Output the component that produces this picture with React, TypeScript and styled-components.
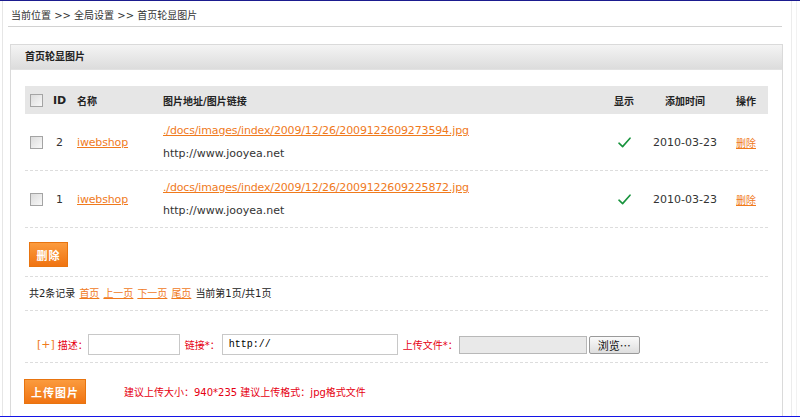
import React from "react";
import styled, { createGlobalStyle } from "styled-components";

const GlobalStyle = createGlobalStyle`
  html, body { margin: 0; padding: 0; background: #fff; }
  body {
    font-family: "DejaVu Sans", "Noto Sans CJK SC", sans-serif;
    font-size: 10px;
    color: #333;
  }
`;

const Frame = styled.div`
  width: 800px;
  height: 417px;
  box-sizing: border-box;
  border-top: 1px solid #1b1b8f;
  border-bottom: 1px solid #1414e6;
  display: flex;
  overflow: hidden;
`;

const LeftRail = styled.div`
  width: 2px;
  flex: none;
`;

const Main = styled.div`
  width: 781px;
  flex: none;
  box-sizing: border-box;
  border-left: 1px solid #e6e6e6;
  padding-left: 7px;
  display: flex;
  flex-direction: column;
`;

const RightRail = styled.div`
  flex: 1;
  display: flex;
  padding-left: 8px;
  gap: 4px;
`;

const RailLine = styled.div<{ $tone: string }>`
  width: 1px;
  background: ${(p) => p.$tone};
`;

const Breadcrumb = styled.div`
  margin-left: -2px;
  width: 774px;
  height: 26px;
  box-sizing: border-box;
  padding: 7px 0 0 3px;
  line-height: 16px;
  border-bottom: 1px solid #d2d2d2;
  color: #333;
`;

const Panel = styled.div`
  margin-top: 17px;
  flex: 1;
  border: 1px solid #dadada;
  border-bottom: none;
  display: flex;
  flex-direction: column;
`;

const PanelHead = styled.div`
  height: 24px;
  line-height: 24px;
  padding-left: 14px;
  font-weight: bold;
  color: #222;
  background: linear-gradient(#f4f4f4, #dcdcdc);
  border-bottom: 1px solid #e2e2e2;
`;

const PanelBody = styled.div`
  padding: 16px 14px 0 14px;
`;

const cols = "22px 25px 86px 1fr 44px 78px 44px";

const HeadRow = styled.div`
  display: grid;
  grid-template-columns: ${cols};
  height: 28px;
  align-items: center;
  background: #e6e6e6;
  font-weight: bold;
  color: #222;
`;

const Row = styled.div`
  display: grid;
  grid-template-columns: ${cols};
  height: 56px;
  align-items: center;
  border-bottom: 1px dashed #dddddd;
`;

const Cell = styled.div<{ $align?: "left" | "center" }>`
  display: flex;
  justify-content: ${(p) => (p.$align === "left" ? "flex-start" : "center")};
  padding-left: ${(p) => (p.$align === "left" ? "5px" : "0")};
`;

const StackCell = styled.div`
  display: flex;
  flex-direction: column;
  padding-left: 5px;
  line-height: 23px;
`;

const Latin = styled.span`
  font-size: 11px;
`;

const Check = styled.input.attrs({ type: "checkbox" })`
  appearance: none;
  margin: 0;
  width: 13px;
  height: 13px;
  box-sizing: border-box;
  border: 1px solid #a4a4a4;
  background: linear-gradient(135deg, #dcdcdc, #f8f8f8);
`;

const Link = styled.a`
  color: #f07a1c;
  text-decoration: underline;
  cursor: pointer;
`;

const PathLink = styled(Link)`
  font-size: 11px;
  letter-spacing: -0.15px;
`;

const ActionBar = styled.div`
  padding: 14px 0 9px 4px;
  border-bottom: 1px dashed #dddddd;
`;

const OrangeButton = styled.button<{ $w: number }>`
  width: ${(p) => p.$w}px;
  height: 25px;
  padding: 0;
  border: 1px solid #e8740f;
  background: linear-gradient(#fb9b3e, #f07412);
  color: #fff;
  font-family: "Noto Sans CJK SC", sans-serif;
  font-size: 11px;
  font-weight: bold;
  letter-spacing: 1px;
  cursor: pointer;
`;

const Pager = styled.div`
  height: 33px;
  line-height: 33px;
  padding-left: 4px;
  border-bottom: 1px dashed #dddddd;
  color: #222;
  display: flex;
  gap: 4px;
`;

const FormRow = styled.div`
  padding: 23px 0 7px 12px;
  border-bottom: 1px dashed #dddddd;
  display: flex;
  align-items: center;
  height: 21px;
`;

const AddLink = styled.a`
  color: #f07a1c;
  font-size: 11px;
  margin-right: 3px;
`;

const Label = styled.span`
  color: #e60012;
`;

const TextBox = styled.input<{ $w: number; $lead?: number }>`
  width: ${(p) => p.$w}px;
  height: 21px;
  box-sizing: border-box;
  border: 1px solid #c8c8c8;
  margin: 0 5px 0 ${(p) => p.$lead ?? 0}px;
  padding: 0 6px;
  font-family: "Liberation Mono", monospace;
  font-size: 10px;
  color: #000;
  outline: none;
`;

const FileBox = styled.div`
  width: 128px;
  height: 18px;
  box-sizing: border-box;
  border: 1px solid #b8b8b8;
  background: #e9e9e9;
  margin: 0 2px 0 1px;
`;

const BrowseButton = styled.button`
  width: 51px;
  height: 18px;
  padding: 0;
  box-sizing: border-box;
  border: 1px solid #9a9a9a;
  border-radius: 2px;
  background: linear-gradient(#fafafa, #dedede);
  font-family: "Noto Sans CJK SC", sans-serif;
  font-size: 11px;
  color: #111;
  line-height: 14px;
`;

const UploadBar = styled.div`
  padding: 16px 0 0 0;
  margin-left: -1px;
  display: flex;
  align-items: center;
`;

const Hint = styled.span`
  margin-left: 38px;
  color: #e60012;
`;

const CheckMark = () => (
  <svg width="13" height="11" viewBox="0 0 13 11">
    <path d="M1 6.2 L4.6 9.6 L12 1.2" fill="none" stroke="#17933c" strokeWidth="1.6" strokeLinecap="round" strokeLinejoin="round" />
  </svg>
);

const items = [
  { id: 2, name: "iwebshop", img: "./docs/images/index/2009/12/26/2009122609273594.jpg", url: "http://www.jooyea.net", date: "2010-03-23" },
  { id: 1, name: "iwebshop", img: "./docs/images/index/2009/12/26/2009122609225872.jpg", url: "http://www.jooyea.net", date: "2010-03-23" },
];

export default function App() {
  return (
    <>
      <GlobalStyle />
      <Frame>
        <LeftRail />
        <Main>
          <Breadcrumb>当前位置 &gt;&gt; 全局设置 &gt;&gt; 首页轮显图片</Breadcrumb>
          <Panel>
            <PanelHead>首页轮显图片</PanelHead>
            <PanelBody>
              <HeadRow>
                <Cell><Check /></Cell>
                <Cell><Latin>ID</Latin></Cell>
                <Cell $align="left">名称</Cell>
                <Cell $align="left">图片地址/图片链接</Cell>
                <Cell>显示</Cell>
                <Cell>添加时间</Cell>
                <Cell>操作</Cell>
              </HeadRow>
              {items.map((it) => (
                <Row key={it.id}>
                  <Cell><Check /></Cell>
                  <Cell><Latin>{it.id}</Latin></Cell>
                  <Cell $align="left"><PathLink>{it.name}</PathLink></Cell>
                  <StackCell>
                    <span><PathLink>{it.img}</PathLink></span>
                    <Latin>{it.url}</Latin>
                  </StackCell>
                  <Cell><CheckMark /></Cell>
                  <Cell><Latin>{it.date}</Latin></Cell>
                  <Cell><Link>删除</Link></Cell>
                </Row>
              ))}
              <ActionBar>
                <OrangeButton $w={39}>删除</OrangeButton>
              </ActionBar>
              <Pager>
                <span>共2条记录</span>
                <Link>首页</Link>
                <Link>上一页</Link>
                <Link>下一页</Link>
                <Link>尾页</Link>
                <span>当前第1页/共1页</span>
              </Pager>
              <FormRow>
                <AddLink>[+]</AddLink>
                <Label>描述：</Label>
                <TextBox $w={92} />
                <Label>链接*：</Label>
                <TextBox $w={176} $lead={2} defaultValue="http://" />
                <Label>上传文件*：</Label>
                <FileBox />
                <BrowseButton>浏览…</BrowseButton>
              </FormRow>
              <UploadBar>
                <OrangeButton $w={62}>上传图片</OrangeButton>
                <Hint>建议上传大小：940*235 建议上传格式：jpg格式文件</Hint>
              </UploadBar>
            </PanelBody>
          </Panel>
        </Main>
        <RightRail>
          <RailLine $tone="#ececec" />
          <RailLine $tone="#f2f2f2" />
        </RightRail>
      </Frame>
    </>
  );
}
